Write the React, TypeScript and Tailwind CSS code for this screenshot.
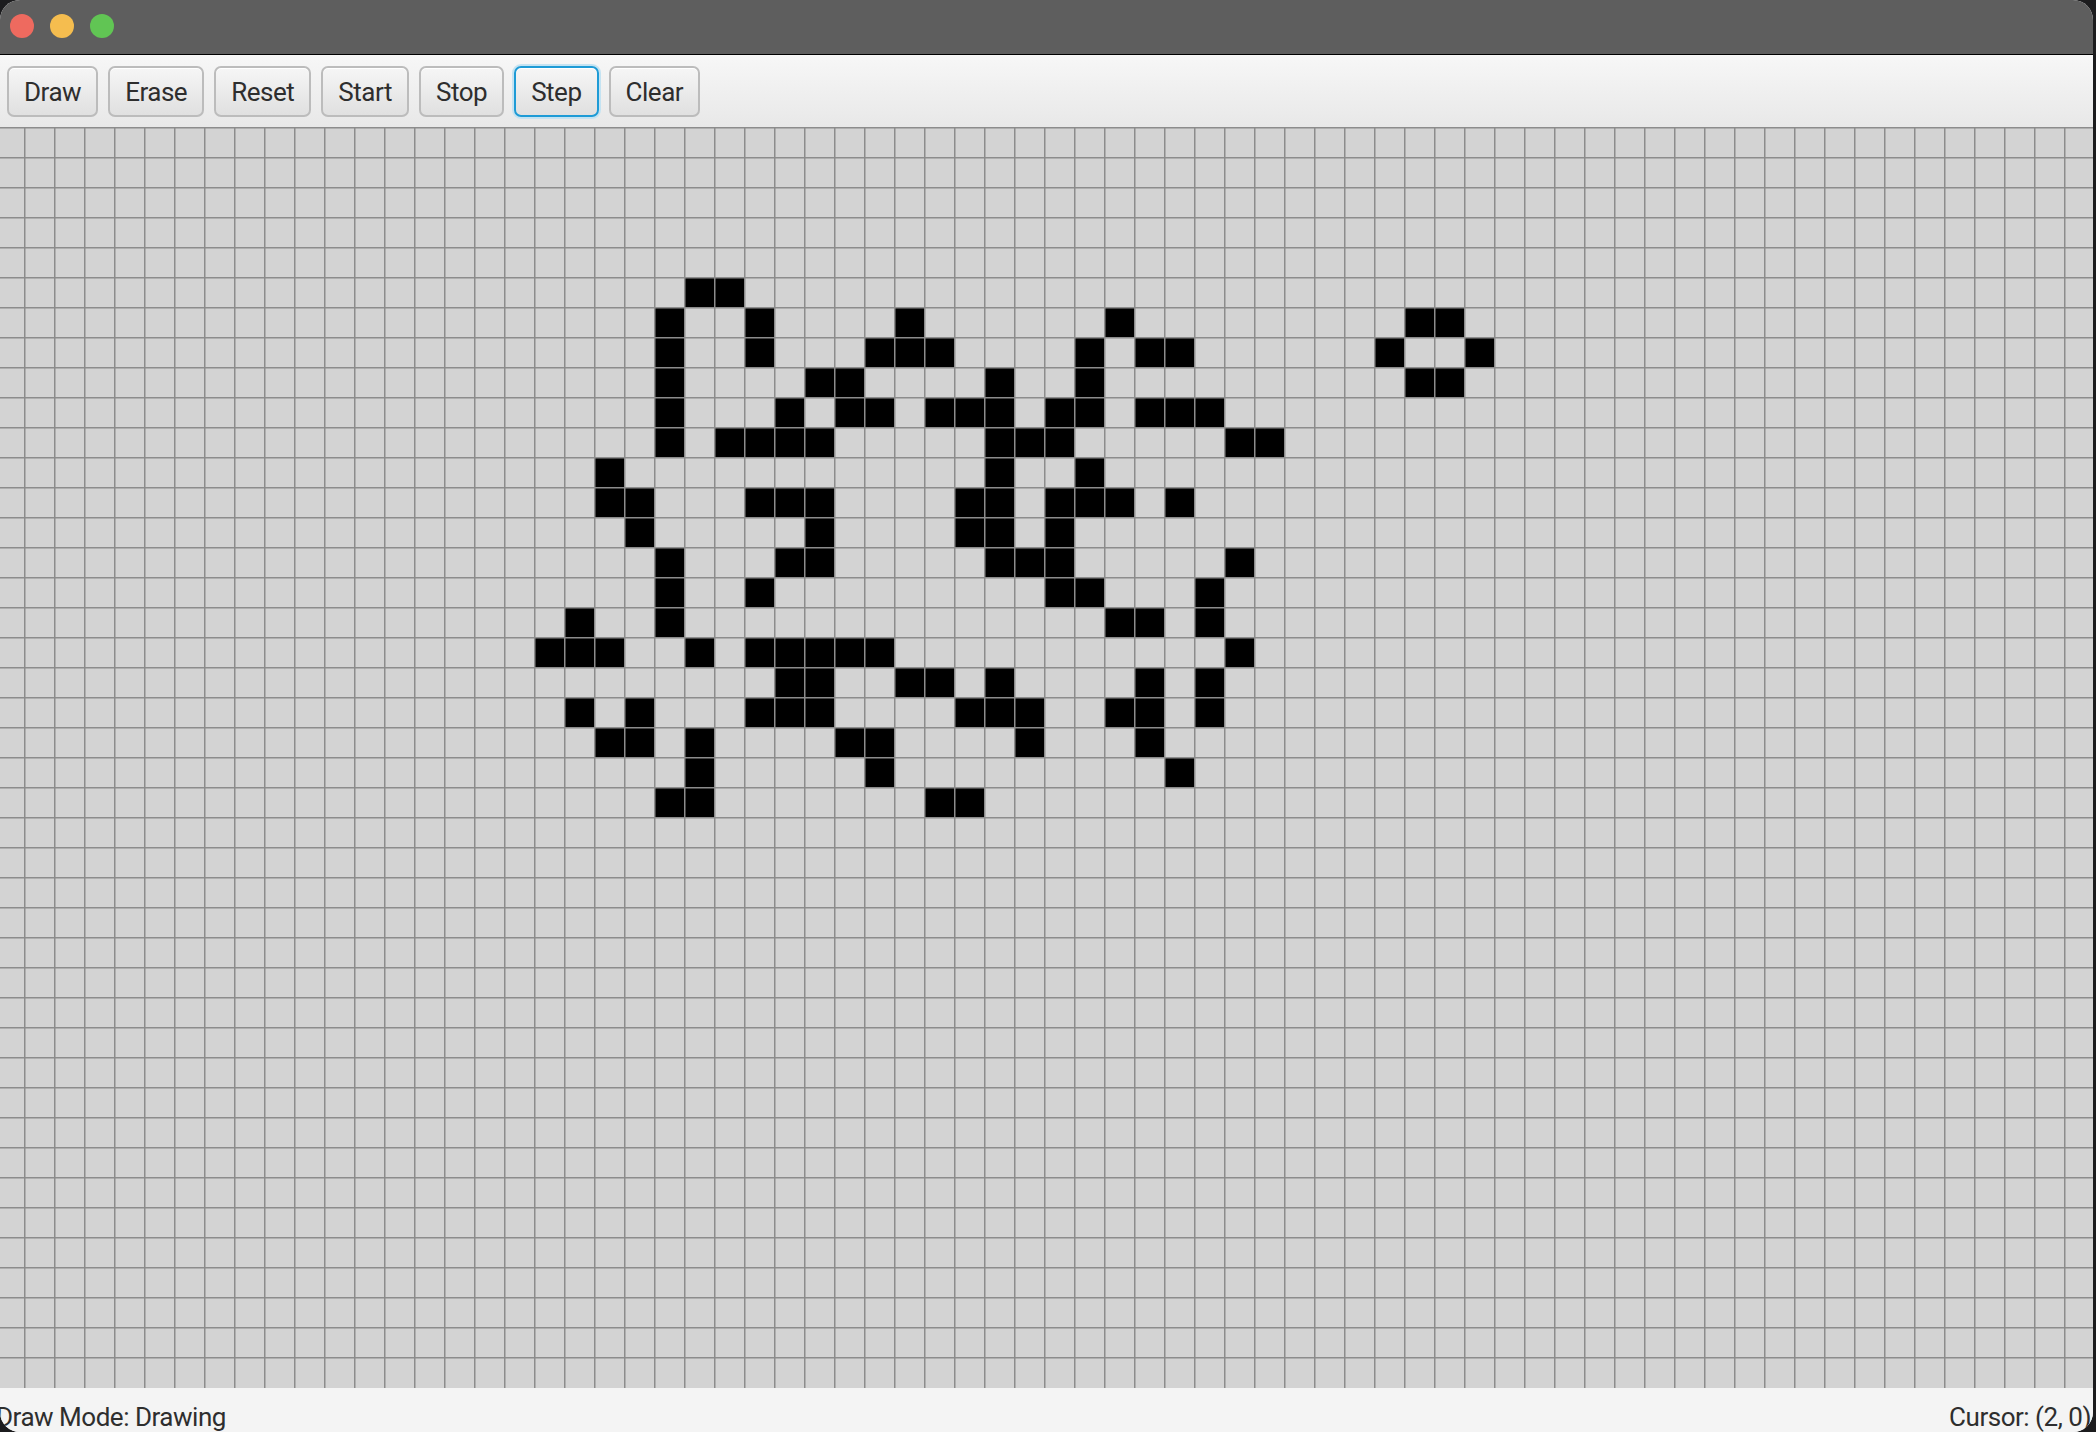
import React from 'react';

const CELL = 30;
const COLS = 70;
const ROWS = 42;

// live cells, row -> columns
const live: Record<number, number[]> = {
  5: [23, 24],
  6: [22, 25, 30, 37, 47, 48],
  7: [22, 25, 29, 30, 31, 36, 38, 39, 46, 49],
  8: [22, 27, 28, 33, 36, 47, 48],
  9: [22, 26, 28, 29, 31, 32, 33, 35, 36, 38, 39, 40],
  10: [22, 24, 25, 26, 27, 33, 34, 35, 41, 42],
  11: [20, 33, 36],
  12: [20, 21, 25, 26, 27, 32, 33, 35, 36, 37, 39],
  13: [21, 27, 32, 33, 35],
  14: [22, 26, 27, 33, 34, 35, 41],
  15: [22, 25, 35, 36, 40],
  16: [19, 22, 37, 38, 40],
  17: [18, 19, 20, 23, 25, 26, 27, 28, 29, 41],
  18: [26, 27, 30, 31, 33, 38, 40],
  19: [19, 21, 25, 26, 27, 32, 33, 34, 37, 38, 40],
  20: [20, 21, 23, 28, 29, 34, 38],
  21: [23, 29, 39],
  22: [22, 23, 31, 32],
};

const buttons = ['Draw', 'Erase', 'Reset', 'Start', 'Stop', 'Step', 'Clear'];

const Board = () => {
  const w = 2093;
  const h = 1261;
  let lines = '';
  for (let m = 0; m < COLS; m++) {
    const x = 24 + m * CELL + 0.75;
    lines += `M${x} 0V${h}`;
  }
  for (let k = 0; k < ROWS; k++) {
    const y = k * CELL + 0.75;
    lines += `M0 ${y}H${w}`;
  }
  return (
    <svg width={w} height={h} className="block">
      <rect width={w} height={h} fill="#d3d3d3" />
      {Object.entries(live).map(([row, cols]) =>
        cols.map((c) => (
          <rect key={`${row}-${c}`} x={-6 + c * CELL} y={Number(row) * CELL} width={CELL} height={CELL} fill="#000" />
        ))
      )}
      <path d={lines} stroke="#8c8c8c" strokeWidth={1.5} fill="none" />
    </svg>
  );
};

export default function App() {
  return (
    <div className="h-screen w-full bg-[#1c1c1e] font-['Roboto','Liberation_Sans',sans-serif] tracking-[-0.03em]">
      <div className="flex h-[1432px] w-[2093px] flex-col overflow-hidden rounded-[20px] bg-[#f4f4f4]">
        {/* title bar */}
        <div className="flex h-[55px] shrink-0 items-center gap-[16px] border-b border-black bg-[#5e5e5e] pl-[10px] pb-[2px]">
          <span className="h-[24px] w-[24px] rounded-full bg-[#ee6a5f]" />
          <span className="h-[24px] w-[24px] rounded-full bg-[#f5bd4f]" />
          <span className="h-[24px] w-[24px] rounded-full bg-[#61c554]" />
        </div>

        {/* toolbar */}
        <div className="flex h-[72px] shrink-0 items-center gap-[10px] bg-linear-to-b from-[#f7f7f7] to-[#e8e8e8] pl-[7px] pt-[1px]">
          {buttons.map((b) => (
            <button
              key={b}
              className={`h-[51px] rounded-[7px] bg-linear-to-b from-[#f6f6f6] to-[#e0e0e0] px-[15px] text-[26px] leading-none text-[#2e2e2e] shadow-[inset_0_1px_0_#ffffff] ${
                b === 'Step'
                  ? 'border-2 border-[#1e9bd6] ring-2 ring-[#c4e3f2]'
                  : 'border-2 border-[#bcbcbc]'
              }`}
            >
              {b}
            </button>
          ))}
        </div>

        {/* board */}
        <div className="flex-1 overflow-hidden">
          <Board />
        </div>

        {/* status bar */}
        <div className="flex h-[44px] shrink-0 items-end justify-between bg-[#f4f4f4] text-[26px] leading-[30px] text-[#2e2e2e]">
          <span className="-ml-[4px]">Draw Mode: Drawing</span>
          <span className="mr-[2px]">Cursor: (2, 0)</span>
        </div>
      </div>
    </div>
  );
}
